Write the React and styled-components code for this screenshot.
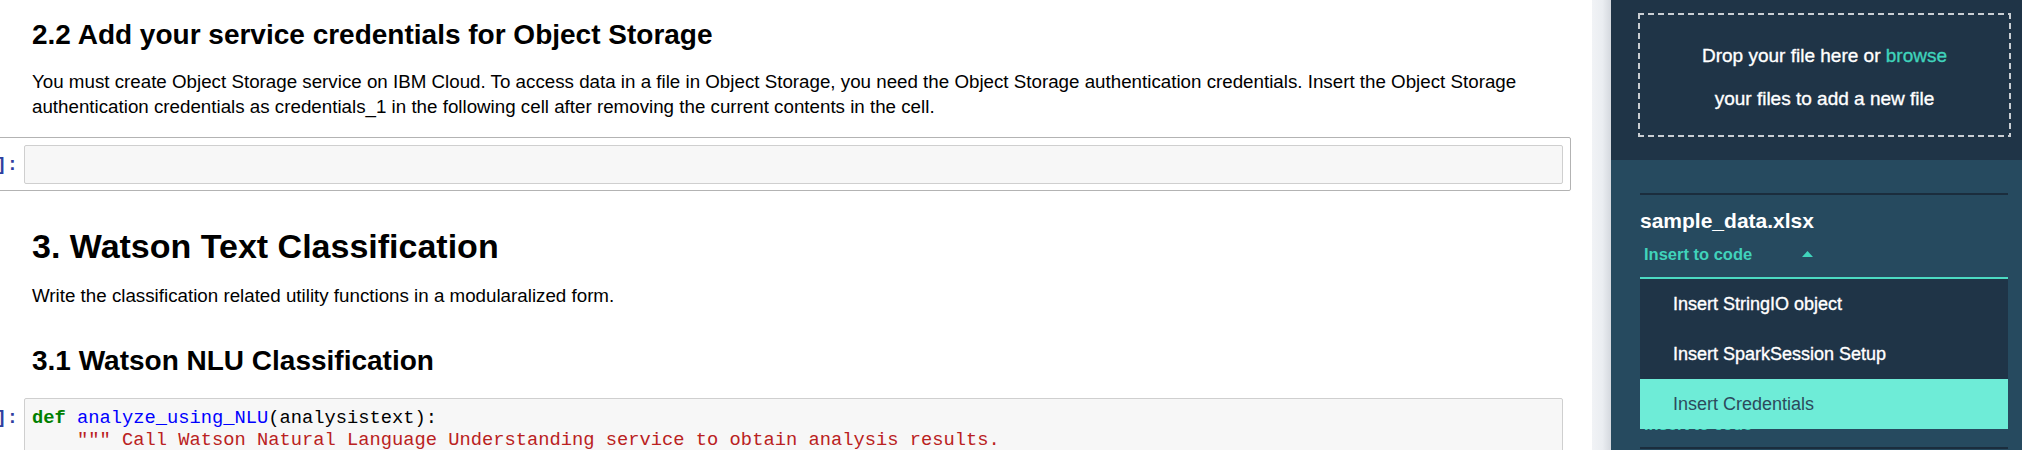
import React from "react";
import styled, { createGlobalStyle } from "styled-components";

const sans = `"Liberation Sans", Arial, Helvetica, sans-serif`;
const mono = `"Liberation Mono", "DejaVu Sans Mono", monospace`;

const GlobalStyle = createGlobalStyle`
  html, body { margin: 0; padding: 0; height: 100%; overflow: hidden; }
  body { font-family: ${sans}; background: #ffffff; color: #000; }
  #root { height: 100%; }
  * { box-sizing: border-box; }
`;

const Shell = styled.div`
  display: flex;
  width: 2022px;
  height: 450px;
  overflow: hidden;
`;

const NotebookPane = styled.main`
  flex: 0 0 1592px;
  overflow: hidden;
  background: #ffffff;
  padding-right: 21px;
`;

const Notebook = styled.div`
  margin-left: -120px;
`;

const Cell = styled.div`
  display: flex;
  border: 1px solid ${(p) => (p.$selected ? "#b3b3b3" : "transparent")};
  border-radius: 2px;
  padding: ${(p) => (p.$code ? "7px 7px 6px" : "0 7px")};
  margin-top: ${(p) => p.$mt || 0}px;
`;

const Prompt = styled.div`
  flex: 0 0 136px;
  padding: 9px 6px 0 0;
  text-align: right;
  font-family: ${mono};
  font-size: 18.75px;
  line-height: 22px;
  font-weight: bold;
  color: #303f9f;
  white-space: pre;
`;

const CodeBox = styled.div`
  flex: 1;
  min-width: 0;
  background: #f7f7f7;
  border: 1px solid #cfcfcf;
  border-radius: 2px;
  padding: 8px 7px 7px;
  min-height: 39px;
  font-family: ${mono};
  font-size: 18.75px;
  line-height: 22px;
  color: #000;
  white-space: pre;
  overflow: hidden;
`;

const CodeLine = styled.div`
  height: 22px;
`;

const Kw = styled.span`
  color: #008000;
  font-weight: bold;
`;

const Fn = styled.span`
  color: #0000ff;
`;

const Str = styled.span`
  color: #ba2121;
`;

const MarkdownBody = styled.div`
  flex: 1;
  min-width: 0;
  padding: 0 8px;
`;

const Heading1 = styled.h1`
  margin: ${(p) => p.$mt || 0}px 0 0;
  font-size: 34px;
  line-height: 41px;
  font-weight: bold;
  color: #000;
`;

const Heading2 = styled.h2`
  margin: ${(p) => p.$mt || 0}px 0 0;
  font-size: 28px;
  line-height: 34px;
  font-weight: bold;
  color: #000;
`;

const Paragraph = styled.p`
  margin: ${(p) => p.$mt || 0}px 0 0;
  font-size: 18.75px;
  line-height: 25px;
  color: #000;
`;

const Gutter = styled.div`
  flex: 0 0 19px;
  background: linear-gradient(90deg, #f1f3f6 0%, #eaedf1 55%, #d4d8de 100%);
`;

const Sidebar = styled.aside`
  flex: 1;
  display: flex;
  flex-direction: column;
  font-family: ${sans};
`;

const DropSection = styled.section`
  background: #1f3447;
  padding: 13px 11px 23px 27px;
`;

const dash = "#c9ced3";

const DropZone = styled.div`
  height: 124px;
  display: flex;
  align-items: center;
  justify-content: center;
  padding-top: 3px;
  background-image:
    repeating-linear-gradient(90deg, ${dash} 0 6px, transparent 6px 10px),
    repeating-linear-gradient(90deg, ${dash} 0 6px, transparent 6px 10px),
    repeating-linear-gradient(180deg, ${dash} 0 6px, transparent 6px 10px),
    repeating-linear-gradient(180deg, ${dash} 0 6px, transparent 6px 10px);
  background-size: 100% 2px, 100% 2px, 2px 100%, 2px 100%;
  background-position: left top, left bottom, left top, right top;
  background-repeat: no-repeat;
`;

const DropText = styled.p`
  margin: 0;
  max-width: 262px;
  text-align: center;
  color: #ffffff;
  font-size: 19px;
  line-height: 43px;
  -webkit-text-stroke: 0.35px currentColor;
`;

const BrowseLink = styled.span`
  color: #3fd3bb;
`;

const FilesSection = styled.section`
  flex: 1;
  background: #264a5f;
  padding: 33px 14px 0 29px;
`;

const FileItem = styled.div`
  border-top: 2px solid #1b2d3d;
  padding: 14px 0 ${(p) => p.$pb || 0}px;
`;

const FileName = styled.div`
  font-size: 21px;
  line-height: 24px;
  font-weight: bold;
  color: #ffffff;
`;

const Dropdown = styled.div`
  position: relative;
  margin-top: 11px;
`;

const InsertButton = styled.div`
  display: flex;
  align-items: center;
  gap: 50px;
  padding: 0 0 13px 4px;
  border-bottom: ${(p) => (p.$open ? "2px solid #4cdac2" : "none")};
  font-size: 16.5px;
  line-height: 20px;
  font-weight: bold;
  color: #40d3bb;
`;

const Menu = styled.ul`
  position: absolute;
  top: 100%;
  left: 0;
  right: 0;
  z-index: 5;
  margin: 0;
  padding: 0;
  list-style: none;
  background: #1f3447;
`;

const MenuItem = styled.li`
  height: 50px;
  display: flex;
  align-items: center;
  padding-left: 33px;
  font-size: 18px;
  color: ${(p) => (p.$active ? "#2c4a5c" : "#ffffff")};
  background: ${(p) => (p.$active ? "#6eecd7" : "transparent")};
  -webkit-text-stroke: ${(p) => (p.$active ? "0" : "0.35px currentColor")};
`;

const Caret = () => (
  <svg width="11" height="6" viewBox="0 0 11 6" aria-hidden="true">
    <polygon points="0,6 5.5,0 11,6" fill="#40d3bb" />
  </svg>
);

export default function App() {
  return (
    <>
      <GlobalStyle />
      <Shell>
        <NotebookPane>
          <Notebook>
            <Cell>
              <Prompt />
              <MarkdownBody>
                <Heading2 $mt={17}>2.2 Add your service credentials for Object Storage</Heading2>
                <Paragraph $mt={17}>
                  You must create Object Storage service on IBM Cloud. To access data in a file in Object Storage, you
                  need the Object Storage authentication credentials. Insert the Object Storage authentication
                  credentials as credentials_1 in the following cell after removing the current contents in the cell.
                </Paragraph>
              </MarkdownBody>
            </Cell>

            <Cell $code $selected $mt={17}>
              <Prompt>In [ ]:</Prompt>
              <CodeBox />
            </Cell>

            <Cell>
              <Prompt />
              <MarkdownBody>
                <Heading1 $mt={34}>3. Watson Text Classification</Heading1>
                <Paragraph $mt={16}>Write the classification related utility functions in a modularalized form.</Paragraph>
                <Heading2 $mt={36}>3.1 Watson NLU Classification</Heading2>
              </MarkdownBody>
            </Cell>

            <Cell $code $mt={11}>
              <Prompt>In [ ]:</Prompt>
              <CodeBox>
                <CodeLine>
                  <Kw>def</Kw> <Fn>analyze_using_NLU</Fn>(analysistext):
                </CodeLine>
                <CodeLine>
                  {"    "}
                  <Str>""" Call Watson Natural Language Understanding service to obtain analysis results.</Str>
                </CodeLine>
                <CodeLine>
                  {"    "}
                  <Str>"""</Str>
                </CodeLine>
                <CodeLine>{"    response = natural_language_understanding.analyze("}</CodeLine>
              </CodeBox>
            </Cell>
          </Notebook>
        </NotebookPane>

        <Gutter />

        <Sidebar>
          <DropSection>
            <DropZone>
              <DropText>
                Drop your file here or <BrowseLink>browse</BrowseLink> your files to add a new file
              </DropText>
            </DropZone>
          </DropSection>

          <FilesSection>
            <FileItem $pb={84}>
              <FileName>sample_data.xlsx</FileName>
              <Dropdown>
                <InsertButton $open>
                  <span>Insert to code</span>
                  <Caret />
                </InsertButton>
                <Menu>
                  <MenuItem>Insert StringIO object</MenuItem>
                  <MenuItem>Insert SparkSession Setup</MenuItem>
                  <MenuItem $active>Insert Credentials</MenuItem>
                </Menu>
              </Dropdown>
            </FileItem>
            <FileItem>
              <FileName>sample_text.csv</FileName>
              <Dropdown>
                <InsertButton>
                  <span>Insert to code</span>
                </InsertButton>
              </Dropdown>
            </FileItem>
            <FileItem />
          </FilesSection>
        </Sidebar>
      </Shell>
    </>
  );
}
